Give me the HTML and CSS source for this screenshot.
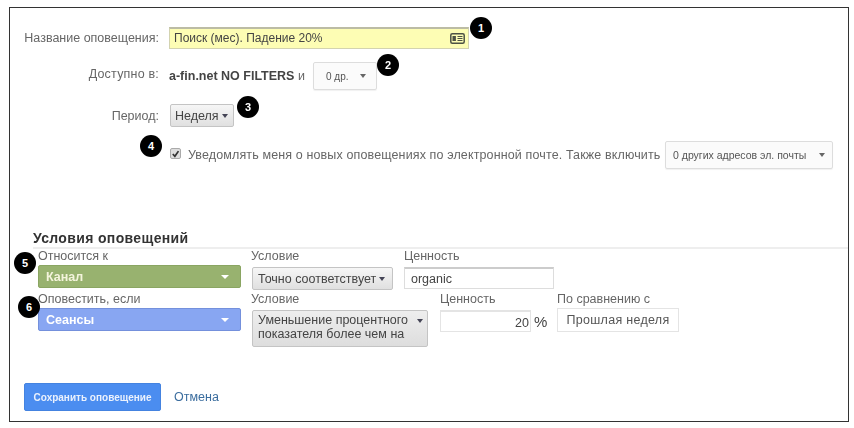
FILE: index.html
```html
<!DOCTYPE html>
<html lang="ru">
<head>
<meta charset="utf-8">
<title>Условия оповещений</title>
<link rel="stylesheet" href="styles.css">
</head>
<body>
<main class="frame">
  <section class="general">
    <div class="row row-name">
      <span class="label">Название оповещения:</span>
      <div class="name-input">
        <span>Поиск (мес). Падение 20%</span>
        <svg class="card-icon" width="15" height="11" viewBox="0 0 15 11" aria-hidden="true"><rect x="0.8" y="0.8" width="13.4" height="9.4" rx="1.5" fill="none" stroke="#4d5244" stroke-width="1.5"/><rect x="2.5" y="3" width="3.4" height="5" fill="#4d5244"/><path d="M7.5 3.5h5M7.5 5.5h5M7.5 7.5h5" stroke="#4d5244" stroke-width="1.1"/></svg>
      </div>
    </div>
    <div class="row row-avail">
      <span class="label label-avail">Доступно в:</span>
      <span class="account"><b>a-fin.net NO FILTERS</b> и</span>
      <button class="btn-white btn-small">0 др.<i class="caret caret-grey"></i></button>
    </div>
    <div class="row row-period">
      <span class="label">Период:</span>
      <button class="btn-grey btn-period">Неделя<i class="caret"></i></button>
    </div>
    <div class="row row-notify">
      <span class="check"><svg width="10" height="10" viewBox="0 0 10 10" aria-hidden="true"><path d="M2 5l2.3 2.6L8.3 1.8" fill="none" stroke="#333" stroke-width="1.9"/></svg></span>
      <span class="notify-text">Уведомлять меня о новых оповещениях по электронной почте. Также включить</span>
      <button class="btn-white btn-emails">0 других адресов эл. почты<i class="caret caret-grey"></i></button>
    </div>
  </section>

  <section class="conditions">
    <h2 class="title">Условия оповещений</h2>
    <div class="cond-row cond-first">
      <div class="field field-main">
        <span class="cap">Относится к</span>
        <div class="pill pill-green">Канал<i class="caret caret-white"></i></div>
      </div>
      <div class="field field-cond1">
        <span class="cap">Условие</span>
        <button class="btn-grey btn-match">Точно соответствует<i class="caret"></i></button>
      </div>
      <div class="field">
        <span class="cap">Ценность</span>
        <div class="text-input input-organic">organic</div>
      </div>
    </div>
    <div class="cond-row cond-second">
      <div class="field field-main">
        <span class="cap">Оповестить, если</span>
        <div class="pill pill-blue">Сеансы<i class="caret caret-white"></i></div>
      </div>
      <div class="field field-cond2">
        <span class="cap">Условие</span>
        <button class="btn-grey btn-decrease"><span>Уменьшение процентного показателя более чем на</span><i class="caret caret-top"></i></button>
      </div>
      <div class="field field-value">
        <span class="cap">Ценность</span>
        <div class="value-line"><div class="text-input input-percent">20</div><span class="percent">%</span></div>
      </div>
      <div class="field">
        <span class="cap">По сравнению с</span>
        <div class="compare">Прошлая неделя</div>
      </div>
    </div>
  </section>

  <footer class="actions">
    <button class="btn-save">Сохранить оповещение</button>
    <a class="cancel">Отмена</a>
  </footer>

  <span class="badge badge-1">1</span>
  <span class="badge badge-2">2</span>
  <span class="badge badge-3">3</span>
  <span class="badge badge-4">4</span>
  <span class="badge badge-5">5</span>
  <span class="badge badge-6">6</span>
</main>
</body>
</html>
```
FILE: styles.css
```css
* { box-sizing: border-box; }
html, body { margin: 0; background: #fff; }
body { width: 854px; height: 428px; overflow: hidden; font-family: "Liberation Sans", Arial, sans-serif; color: #555; }
button { font-family: inherit; padding: 0; margin: 0; }

.frame {
  position: relative;
  width: 840px;
  height: 415px;
  margin: 7px 0 0 9px;
  border: 1px solid #333;
  filter: blur(0.35px);
}

.general { height: 222px; padding-top: 19px; }
.row { display: flex; align-items: center; }
.label { width: 149px; text-align: right; font-size: 12.5px; color: #666; margin-right: 10px; flex: none; }

.row-name { height: 21px; }
.name-input {
  width: 300px; height: 22px; display: flex; align-items: center; justify-content: space-between;
  padding: 0 3px 0 4px; background: #fdfdb4; border: 1px solid #d3d3b0; border-top: 2px solid #bcbca4;
  font-size: 12px; color: #444;
}

.row-avail { height: 28px; margin-top: 14px; }
.label-avail { margin-top: -5px; letter-spacing: 0.2px; }
.account { font-size: 12.5px; color: #666; width: 144px; white-space: nowrap; }
.account b { color: #444; }

.btn-white {
  background: #fbfbfb; border: 1px solid #ddd; border-radius: 2px; color: #555;
  box-shadow: 0 1px 1px rgba(0,0,0,.06); display: flex; align-items: center; justify-content: space-between;
}
.btn-small { width: 64px; height: 28px; font-size: 10px; padding: 0 10px 0 12px; }
.btn-emails { width: 168px; height: 28px; font-size: 10.5px; padding: 0 7px 0 7px; }

.btn-grey {
  background: linear-gradient(#f6f6f6, #e0e0e0); border: 1px solid #c4c4c4; border-radius: 2px; color: #444;
  display: flex; align-items: center;
}
.btn-period { width: 64px; height: 23px; font-size: 12.5px; padding: 0 0 0 4px; margin-left: 1px; }

.row-period { height: 23px; margin-top: 14px; }
.row-notify { height: 28px; margin-top: 14px; padding-left: 160px; }
.check {
  width: 11px; height: 11px; background: #ddd; border: 1px solid #aaa; border-radius: 2px;
  display: flex; align-items: center; justify-content: center; margin-top: -3px;
}
.notify-text { font-size: 12.5px; color: #666; letter-spacing: 0.13px; width: 477px; margin-left: 7px; white-space: nowrap; }

.caret { display: inline-block; width: 0; height: 0; flex: none; margin-left: 3px; border: 3.5px solid transparent; border-top: 4px solid #445; border-bottom: 0; }
.caret-grey { border-top-color: #666; }
.caret-white { border-top-color: #fff; border-left-width: 4px; border-right-width: 4px; }
.caret-top { align-self: flex-start; margin-top: 6px; }

.title { margin: 0 0 0 23px; padding-bottom: 1px; font-size: 14px; line-height: 16px; font-weight: bold; color: #333; letter-spacing: 0.35px; border-bottom: 2px solid #eee; }

.cond-row { display: flex; padding-left: 28px; }
.cond-first { height: 43px; }
.cond-second { height: 60px; }
.field { display: flex; flex-direction: column; flex: none; }
.cap { font-size: 12.5px; line-height: 14px; color: #666; height: 15px; white-space: nowrap; }
.field-main { width: 213px; }
.field-cond1 { width: 153px; }
.field-cond2 { width: 189px; }
.field-value { width: 117px; }

.pill {
  width: 203px; height: 23px; border-radius: 2px; color: #fff; font-size: 12.5px; font-weight: bold;
  display: flex; align-items: center; justify-content: space-between; padding: 0 11px 0 7px; margin-top: 1px;
}
.pill-green { background: #98b26f; border: 1px solid #8aa562; color: #f4f4dc; }
.pill-blue { background: #88a6f2; border: 1px solid #7490dc; }

.btn-match { width: 141px; height: 23px; font-size: 12.5px; padding: 0 0 0 5px; margin: 3px 0 0 1px; white-space: nowrap; }
.btn-decrease {
  width: 176px; height: 37px; font-size: 12.5px; padding: 2px 4px 0 5px; margin: 3px 0 0 1px; line-height: 14px;
  text-align: left; align-items: flex-start; justify-content: space-between; background: linear-gradient(#eee, #ddd);
}
.btn-decrease span { width: 152px; }

.text-input { background: #fff; border: 1px solid #ddd; border-top: 2px solid #ccc; font-size: 12.5px; color: #444; display: flex; align-items: center; }
.input-organic { width: 150px; height: 22px; padding-left: 6px; margin-top: 3px; }
.value-line { display: flex; align-items: center; margin-top: 3px; }
.input-percent { width: 91px; height: 22px; justify-content: flex-end; padding: 3px 1px 0 0; border-color: #e4e4e4; }
.percent { font-size: 15px; color: #444; margin-left: 3px; }
.compare { width: 122px; height: 24px; border: 1px solid #e4e4e4; display: flex; align-items: center; justify-content: center; font-size: 12.5px; color: #555; margin-top: 1px; letter-spacing: 0.3px; }

.actions { display: flex; align-items: center; margin-top: 31px; padding-left: 14px; }
.btn-save { width: 137px; height: 28px; background: #4b8df0; border: 1px solid #4483e0; border-radius: 2px; color: #eaf1fd; font-size: 10px; font-weight: bold; }
.cancel { margin-left: 13px; font-size: 12.5px; color: #3b6d9e; }

.badge {
  position: absolute; width: 22px; height: 22px; border-radius: 50%; background: #000; color: #fff;
  font-size: 11px; font-weight: bold; display: flex; align-items: center; justify-content: center;
}
.badge-1 { left: 460px; top: 9px; }
.badge-2 { left: 367px; top: 46px; }
.badge-3 { left: 227px; top: 88px; }
.badge-4 { left: 130px; top: 127px; }
.badge-5 { left: 4px; top: 244px; }
.badge-6 { left: 8px; top: 288px; }
```
